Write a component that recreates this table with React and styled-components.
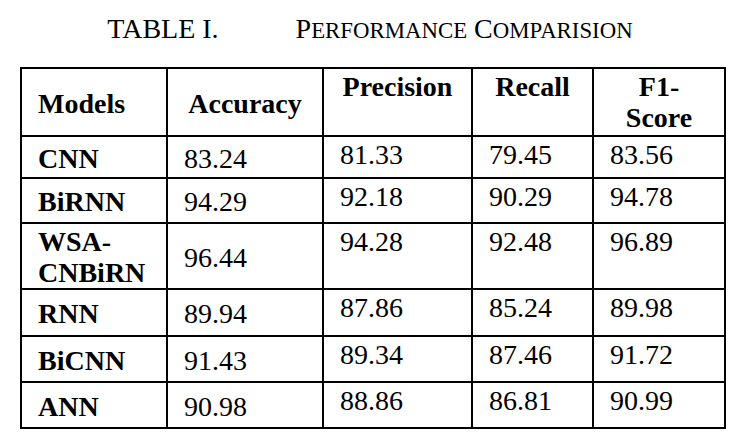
import styled, { createGlobalStyle } from "styled-components";

const GlobalStyle = createGlobalStyle`
  body {
    margin: 0;
    background: #fff;
    color: #000;
    font-family: "Liberation Serif", "Times New Roman", serif;
  }
`;

const Page = styled.div`
  width: 749px;
  padding: 13px 0 0 20px;
  box-sizing: border-box;
`;

const Caption = styled.div`
  width: 704px;
  display: flex;
  justify-content: center;
  gap: 77px;
  padding-right: 4px;
  box-sizing: border-box;
  font-size: 28px;
  line-height: 31px;
  white-space: nowrap;
`;

const Small = styled.span`
  font-size: 0.815em;
`;

const Table = styled.table`
  margin-top: 21px;
  width: 704px;
  table-layout: fixed;
  border-collapse: collapse;
  font-family: "Liberation Serif", "Times New Roman", serif;
  font-size: 28px;
  line-height: 31px;
  color: #000;
`;

const Col = styled.col`
  width: ${(p) => p.$w}px;
`;

const Row = styled.tr`
  height: ${(p) => p.$h}px;
`;

const Cell = styled.td`
  border: 2px solid #000;
  padding: 2px 16px 0;
  font-family: "Liberation Serif", "Times New Roman", serif;
  font-size: 28px;
  vertical-align: ${(p) => (p.$top ? "top" : "middle")};
  text-align: ${(p) => (p.$center ? "center" : "left")};
  font-weight: ${(p) => (p.$bold ? 700 : 400)};
`;

const rows = [
  { name: "CNN", h: 42, vals: ["83.24", "81.33", "79.45", "83.56"] },
  { name: "BiRNN", h: 45, vals: ["94.29", "92.18", "90.29", "94.78"] },
  { name: ["WSA-", "CNBiRN"], h: 66, vals: ["96.44", "94.28", "92.48", "96.89"] },
  { name: "RNN", h: 47, vals: ["89.94", "87.86", "85.24", "89.98"] },
  { name: "BiCNN", h: 46, vals: ["91.43", "89.34", "87.46", "91.72"] },
  { name: "ANN", h: 46, vals: ["90.98", "88.86", "86.81", "90.99"] },
];

export default function App() {
  return (
    <>
      <GlobalStyle />
      <Page>
        <Caption>
          <span>TABLE I.</span>
          <span>
            P<Small>ERFORMANCE</Small> C<Small>OMPARISION</Small>
          </span>
        </Caption>
        <Table>
          <colgroup>
            <Col $w={146} />
            <Col $w={156} />
            <Col $w={149} />
            <Col $w={121} />
            <Col $w={132} />
          </colgroup>
          <thead>
            <Row $h={68}>
              <Cell as="th" $bold>Models</Cell>
              <Cell as="th" $bold $center>Accuracy</Cell>
              <Cell as="th" $bold $top $center>Precision</Cell>
              <Cell as="th" $bold $top $center>Recall</Cell>
              <Cell as="th" $bold $top $center>
                F1-
                <br />
                Score
              </Cell>
            </Row>
          </thead>
          <tbody>
            {rows.map((r, i) => (
              <Row key={i} $h={r.h}>
                <Cell $bold>
                  {Array.isArray(r.name) ? (
                    <>
                      {r.name[0]}
                      <br />
                      {r.name[1]}
                    </>
                  ) : (
                    r.name
                  )}
                </Cell>
                <Cell>{r.vals[0]}</Cell>
                <Cell $top>{r.vals[1]}</Cell>
                <Cell $top>{r.vals[2]}</Cell>
                <Cell $top>{r.vals[3]}</Cell>
              </Row>
            ))}
          </tbody>
        </Table>
      </Page>
    </>
  );
}
